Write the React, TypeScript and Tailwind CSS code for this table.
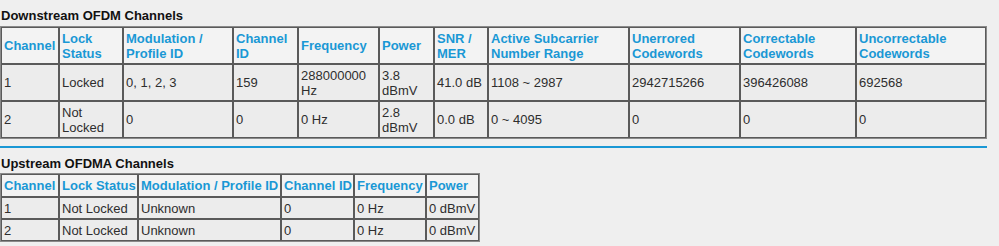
import React from "react";

type Row = string[];

const downHead = [
  "Channel",
  "Lock Status",
  "Modulation / Profile ID",
  "Channel ID",
  "Frequency",
  "Power",
  "SNR / MER",
  "Active Subcarrier Number Range",
  "Unerrored Codewords",
  "Correctable Codewords",
  "Uncorrectable Codewords",
];
const downCols = [58, 64, 110, 65, 81, 55, 54, 141, 111, 116, 130];
const downRows: Row[] = [
  ["1", "Locked", "0, 1, 2, 3", "159", "288000000 Hz", "3.8 dBmV", "41.0 dB", "1108 ~ 2987", "2942715266", "396426088", "692568"],
  ["2", "Not Locked", "0", "0", "0 Hz", "2.8 dBmV", "0.0 dB", "0 ~ 4095", "0", "0", "0"],
];

const upHead = ["Channel", "Lock Status", "Modulation / Profile ID", "Channel ID", "Frequency", "Power"];
const upCols = [58, 79, 143, 73, 72, 53];
const upRows: Row[] = [
  ["1", "Not Locked", "Unknown", "0", "0 Hz", "0 dBmV"],
  ["2", "Not Locked", "Unknown", "0", "0 Hz", "0 dBmV"],
];

function ChannelTable({
  head,
  cols,
  rows,
  headH,
  rowH,
  nowrap,
}: {
  head: string[];
  cols: number[];
  rows: Row[];
  headH: string;
  rowH: string;
  nowrap?: boolean;
}) {
  const total = cols.reduce((a, b) => a + b, 0);
  const wrap = nowrap ? "whitespace-nowrap overflow-visible" : "";
  return (
    <table
      className="table-fixed border-separate border-spacing-0 border border-[#8a8a8a] text-[13px] leading-[15px]"
      style={{ width: total }}
    >
      <colgroup>
        {cols.map((w, i) => (
          <col key={i} style={{ width: w }} />
        ))}
      </colgroup>
      <thead>
        <tr className={headH}>
          {head.map((h) => (
            <th
              key={h}
              className={`border border-[#5a5a5a] bg-[#f3f3f3] px-[2px] text-left align-middle font-bold text-[#1a98d5] ${wrap}`}
            >
              {h}
            </th>
          ))}
        </tr>
      </thead>
      <tbody>
        {rows.map((r, ri) => (
          <tr key={ri} className={rowH}>
            {r.map((c, ci) => (
              <td
                key={ci}
                className={`border border-[#5a5a5a] bg-[#ececec] px-[2px] align-middle text-[#2e2e2e] ${wrap}`}
              >
                {c}
              </td>
            ))}
          </tr>
        ))}
      </tbody>
    </table>
  );
}

export default function App() {
  return (
    <div className="h-[246px] w-[999px] overflow-hidden bg-[#efefef] pt-[8px] font-['Liberation_Sans',Arial,sans-serif]">
      {/* downstream */}
      <h2 className="mb-[2px] pl-[1px] text-[13px] font-bold leading-[16px] text-[#111]">
        Downstream OFDM Channels
      </h2>
      <ChannelTable head={downHead} cols={downCols} rows={downRows} headH="h-[37px]" rowH="h-[37px]" />

      <div className="mt-[7px] h-[2px] w-[987px] bg-[#1a98d5]" />

      {/* upstream */}
      <h2 className="mb-[1px] mt-[8px] pl-[1px] text-[13px] font-bold leading-[16px] text-[#111]">
        Upstream OFDMA Channels
      </h2>
      <ChannelTable
        head={upHead}
        cols={upCols}
        rows={upRows}
        headH="h-[23px]"
        rowH="h-[22px]"
        nowrap
      />
    </div>
  );
}
